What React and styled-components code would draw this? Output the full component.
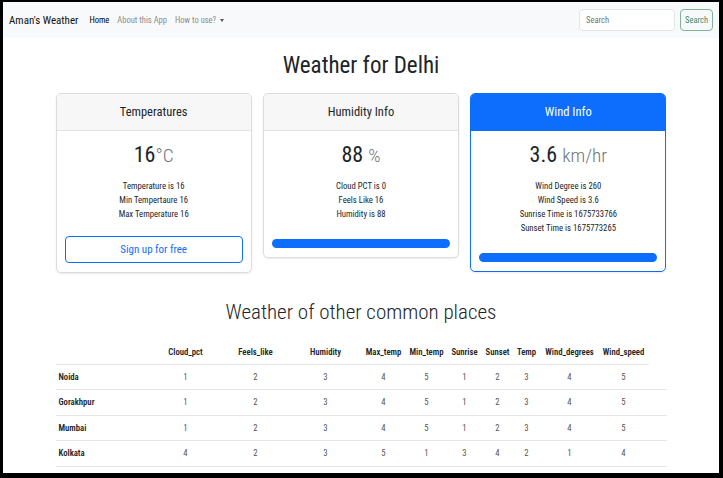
import React from "react";
import styled, { createGlobalStyle } from "styled-components";

const FONT = `"Roboto Condensed", "DejaVu Sans Condensed", "Liberation Sans Narrow", "Open Sans", sans-serif`;

const GlobalStyle = createGlobalStyle`
  * { box-sizing: border-box; }
  body {
    margin: 0;
    background: #000;
    font-family: ${FONT};
    color: #212529;
  }
`;

const Frame = styled.div`
  width: 723px;
  height: 478px;
  border-style: solid;
  border-color: #000;
  border-width: 2px 4px 5px 3px;
  background: #fff;
  overflow: hidden;
`;

const Navbar = styled.nav`
  height: 36px;
  background: #f8f9fa;
  display: flex;
  align-items: center;
  padding: 0 6px;
`;

const Brand = styled.a`
  font-size: 11px;
  color: #111;
  margin-right: 7px;
`;

const NavLink = styled.a`
  font-size: 8.5px;
  padding: 0 4px;
  color: ${p => (p.$active ? "#000" : "#8a8c8e")};
  display: flex;
  align-items: center;
`;

const Caret = styled.span`
  width: 0;
  height: 0;
  margin-left: 4px;
  border-left: 2.5px solid transparent;
  border-right: 2.5px solid transparent;
  border-top: 3px solid #555;
`;

const SearchForm = styled.form`
  margin-left: auto;
  display: flex;
  gap: 5px;
`;

const SearchInput = styled.input`
  width: 96px;
  height: 22px;
  border: 1px solid #e3e5e8;
  border-radius: 4px;
  padding: 0 6px;
  font-family: ${FONT};
  font-size: 8.5px;
  background: #fff;
  &::placeholder { color: #6c757d; }
`;

const SearchButton = styled.button`
  width: 33px;
  height: 22px;
  border: 1px solid #7fb39a;
  border-radius: 4px;
  background: transparent;
  color: #3f8a68;
  font-family: ${FONT};
  font-size: 8.5px;
  padding: 0;
`;

const Main = styled.main`
  width: 611px;
  margin: 0 auto;
`;

const Heading = styled.h1`
  margin: 14px 0 13px;
  text-align: center;
  font-size: 23px;
  line-height: 28px;
  font-weight: 400;
`;

const CardRow = styled.div`
  display: flex;
  gap: 11px;
  align-items: flex-start;
`;

const Card = styled.div`
  flex: 1;
  border: 1px solid ${p => (p.$primary ? "#0d6efd" : "#dcdcdc")};
  border-radius: 5px;
  box-shadow: 0 1px 2px rgba(0, 0, 0, 0.08);
  overflow: hidden;
  text-align: center;
`;

const CardHeader = styled.div`
  padding: 10px 0;
  background: ${p => (p.$primary ? "#0d6efd" : "#f7f7f7")};
  color: ${p => (p.$primary ? "#fff" : "#212529")};
  border-bottom: 1px solid ${p => (p.$primary ? "#0d6efd" : "#e2e2e2")};
  font-size: 12.5px;
  line-height: 16px;
`;

const CardBody = styled.div`
  padding: 10px 8px 9px;
`;

const BigValue = styled.div`
  font-size: 22px;
  line-height: 28px;
  color: #212529;
`;

const Unit = styled.small`
  font-size: 0.875em;
  font-weight: 300;
  color: #6c757d;
`;

const List = styled.ul`
  list-style: none;
  margin: 9px 0 0;
  padding: 0;
  font-size: 8.7px;
  line-height: 14px;
`;

const OutlineButton = styled.button`
  display: block;
  width: 100%;
  height: 27px;
  margin-top: 15px;
  border: 1px solid #0d6efd;
  border-radius: 4px;
  background: #fff;
  color: #0d6efd;
  font-family: ${FONT};
  font-size: 11px;
`;

const Progress = styled.div`
  height: 9px;
  margin-top: 18px;
  border-radius: 5px;
  background: #e9ecef;
  overflow: hidden;
`;

const ProgressFill = styled.div`
  height: 100%;
  background: #0d6efd;
`;

const SectionTitle = styled.h2`
  margin: 24px 0 13px;
  text-align: center;
  font-size: 21px;
  line-height: 30px;
  font-weight: 300;
`;

const Table = styled.table`
  width: 611px;
  table-layout: fixed;
  border-collapse: collapse;
  font-size: 8.7px;
`;

const Th = styled.th`
  height: 24px;
  padding: 0 3px;
  font-weight: 600;
  text-align: center;
  border-bottom: 1px solid #e4e6e8;
`;

const Row = styled.tr`
  height: 25.5px;
`;

const Td = styled.td`
  padding: 0 3px;
  text-align: ${p => (p.$name ? "left" : "center")};
  font-weight: ${p => (p.$name ? 600 : 400)};
  color: ${p => (p.$name ? "#212529" : "#555")};
  border-bottom: 1px solid #e4e6e8;
`;

const widths = [95, 70, 70, 70, 46, 40, 36, 30, 28, 58, 50, 18];
const columns = ["Cloud_pct", "Feels_like", "Humidity", "Max_temp", "Min_temp", "Sunrise", "Sunset", "Temp", "Wind_degrees", "Wind_speed"];
const places = [
  { name: "Noida", values: [1, 2, 3, 4, 5, 1, 2, 3, 4, 5] },
  { name: "Gorakhpur", values: [1, 2, 3, 4, 5, 1, 2, 3, 4, 5] },
  { name: "Mumbai", values: [1, 2, 3, 4, 5, 1, 2, 3, 4, 5] },
  { name: "Kolkata", values: [4, 2, 3, 5, 1, 3, 4, 2, 1, 4] },
];

export default function App() {
  return (
    <>
      <GlobalStyle />
      <Frame>
        <Navbar>
          <Brand>Aman's Weather</Brand>
          <NavLink $active>Home</NavLink>
          <NavLink>About this App</NavLink>
          <NavLink>How to use?<Caret /></NavLink>
          <SearchForm onSubmit={e => e.preventDefault()}>
            <SearchInput placeholder="Search" />
            <SearchButton type="submit">Search</SearchButton>
          </SearchForm>
        </Navbar>

        <Main>
          <Heading>Weather for Delhi</Heading>
          <CardRow>
            <Card>
              <CardHeader>Temperatures</CardHeader>
              <CardBody>
                <BigValue>16<Unit>°C</Unit></BigValue>
                <List>
                  <li>Temperature is 16</li>
                  <li>Min Tempertaure 16</li>
                  <li>Max Temperature 16</li>
                </List>
                <OutlineButton>Sign up for free</OutlineButton>
              </CardBody>
            </Card>
            <Card>
              <CardHeader>Humidity Info</CardHeader>
              <CardBody>
                <BigValue>88 <Unit>%</Unit></BigValue>
                <List>
                  <li>Cloud PCT is 0</li>
                  <li>Feels Like 16</li>
                  <li>Humidity is 88</li>
                </List>
                <Progress><ProgressFill style={{ width: "100%" }} /></Progress>
              </CardBody>
            </Card>
            <Card $primary>
              <CardHeader $primary>Wind Info</CardHeader>
              <CardBody>
                <BigValue>3.6 <Unit>km/hr</Unit></BigValue>
                <List>
                  <li>Wind Degree is 260</li>
                  <li>Wind Speed is 3.6</li>
                  <li>Sunrise Time is 1675733766</li>
                  <li>Sunset Time is 1675773265</li>
                </List>
                <Progress><ProgressFill style={{ width: "100%" }} /></Progress>
              </CardBody>
            </Card>
          </CardRow>

          <SectionTitle>Weather of other common places</SectionTitle>
          <Table>
            <colgroup>
              {widths.map((w, i) => <col key={i} style={{ width: w }} />)}
            </colgroup>
            <thead>
              <tr>
                <Th />
                {columns.map(c => <Th key={c}>{c}</Th>)}
              </tr>
            </thead>
            <tbody>
              {places.map(p => (
                <Row key={p.name}>
                  <Td $name>{p.name}</Td>
                  {p.values.map((v, i) => <Td key={i}>{v}</Td>)}
                  <Td />
                </Row>
              ))}
            </tbody>
          </Table>
        </Main>
      </Frame>
    </>
  );
}
